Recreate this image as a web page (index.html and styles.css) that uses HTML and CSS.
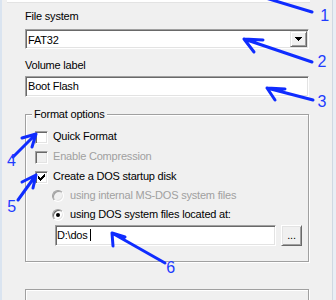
FILE: index.html
```html
<!DOCTYPE html>
<html lang="en">
  <head>
    <meta charset="UTF-8" />
    <meta name="viewport" content="width=device-width, initial-scale=1.0" />
    <title>Format Removable Disk</title>
    <link rel="stylesheet" href="styles.css">
  </head>
  <body>
    <div class="window">
      <div class="top-strip"></div>
      <div class="content">
        <label class="field-label">File system</label>
        <div class="combo">
          <span class="combo-value">FAT32</span>
          <span class="combo-btn">
            <svg width="7" height="4" viewBox="0 0 7 4"><path d="M0 0h7v1h-1v1h-1v1h-1v1h-1v-1h-1v-1h-1v-1h-1z" /></svg>
          </span>
        </div>

        <label class="field-label">Volume label</label>
        <div class="textbox">Boot Flash</div>

        <div class="group">
          <div class="group-title">Format options</div>
          <div class="check-row"><span class="check"></span>Quick Format</div>
          <div class="check-row disabled"><span class="check"></span>Enable Compression</div>
          <div class="check-row">
            <span class="check">
              <svg width="9" height="9" viewBox="0 0 9 9" shape-rendering="crispEdges"><path d="M7 1h1v1h-1z M6 2h2v1h-2z M1 3h1v1h-1z M5 3h3v1h-3z M1 4h2v1h-2z M4 4h3v1h-3z M1 5h5v1h-5z M2 6h3v1h-3z M3 7h1v1h-1z" /></svg>
            </span>Create a DOS startup disk
          </div>
          <div class="radio-row disabled"><span class="radio"></span>using internal MS-DOS system files</div>
          <div class="radio-row"><span class="radio selected"></span>using DOS system files located at:</div>
          <div class="path-row">
            <div class="textbox path">D:\dos<span class="caret"></span></div>
            <span class="button">...</span>
          </div>
        </div>

        <div class="group group-next"></div>
      </div>

      <!-- blue annotation arrows drawn over the dialog -->
      <svg class="notes" width="336" height="300" viewBox="0 0 336 300">
        <g class="arrows">
          <path d="M312 12 L259 -4" />
          <path d="M312 62 L244 39 M254 52 L244 39 L263 40" />
          <path d="M313 100 L267 88 M285 89 L267 88 L275 100" />
          <path d="M13 157 L36 134 M22 138 L36 134 L32 147" />
          <path d="M18 200 L36 175 M22 182 L36 175 L33 188" />
          <path d="M165 263 L112 233 M125 237 L112 233 L113 246" />
        </g>
        <text x="320.3" y="21">1</text>
        <text x="317.5" y="67">2</text>
        <text x="317.5" y="107">3</text>
        <text x="7" y="165.5">4</text>
        <text x="7.3" y="212">5</text>
        <text x="166.3" y="273">6</text>
      </svg>
    </div>
  </body>
</html>
```

FILE: styles.css
```css
body {
  margin: 0;
  background: #e9eef5;
  font-family: "Liberation Sans", Arial, sans-serif;
  font-size: 11px;
  line-height: 13px;
  letter-spacing: -0.2px;
  color: #000;
}
.window {
  position: relative;
  width: 330px;
  height: 300px;
  overflow: hidden;
  background: #f0f0f0;
  border-left: 2px solid #dae4f0;
  border-right: 1px solid #d0d8e2;
}
.top-strip {
  margin-left: 5px;
  width: 303px;
  height: 2px;
  background: #fff;
  border-bottom: 1px solid #e3e3e3;
}
.content {
  padding-left: 23px;
}
.field-label {
  display: block;
  margin-top: 7px;
}
.field-label + .textbox {
  margin-top: 4px;
}
.combo + .field-label {
  margin-top: 10px;
}

/* sunken 3d fields */
.combo,
.textbox {
  box-sizing: border-box;
  width: 284px;
  background: #fff;
  border: 1px solid;
  border-color: #a0a0a0 #fff #fff #a0a0a0;
  box-shadow: inset 1px 1px #696969, inset -1px -1px #e3e3e3;
}
.combo {
  display: flex;
  height: 20px;
  margin-top: 6px;
  padding: 1px;
}
.combo-value {
  flex: 1;
  padding: 3px 0 0 1px;
}
.combo-btn {
  box-sizing: border-box;
  display: flex;
  align-items: center;
  justify-content: center;
  width: 17px;
  height: 16px;
  background: #f0f0f0;
  border: 1px solid;
  border-color: #e3e3e3 #696969 #696969 #e3e3e3;
  box-shadow: inset 1px 1px #fff, inset -1px -1px #a0a0a0;
}
.textbox {
  height: 21px;
  padding: 3px 0 0 2px;
}

/* etched group box */
.group {
  box-sizing: border-box;
  width: 284px;
  margin-top: 17px;
  padding: 0 0 15px 9px;
  border: 1px solid #a0a0a0;
  box-shadow: inset 1px 1px #fff, 1px 1px #fff;
}
.group-title {
  display: table;
  margin: -7px 0 0 -3px;
  padding: 0 2px;
  background: #f0f0f0;
}
.group-next {
  height: 40px;
  margin-top: 27px;
  padding: 0;
}

.check-row,
.radio-row {
  display: flex;
  align-items: flex-start;
  height: 13px;
  margin-top: 7px;
}
.group-title + .check-row {
  margin-top: 9px;
}
.radio-row {
  margin-top: 6px;
  padding-left: 17px;
}
.disabled {
  color: #a0a0a0;
}
.check {
  box-sizing: border-box;
  display: flex;
  align-items: center;
  justify-content: center;
  width: 13px;
  height: 13px;
  margin: 1px 5px 0 0;
  background: #fff;
  border: 1px solid;
  border-color: #a0a0a0 #fff #fff #a0a0a0;
  box-shadow: inset 1px 1px #696969, inset -1px -1px #e3e3e3;
}
.disabled .check {
  background: #f0f0f0;
}
.radio {
  box-sizing: border-box;
  position: relative;
  width: 12px;
  height: 12px;
  margin: 1px 6px 0 0;
  border-radius: 50%;
  background: #fff;
  border: 1px solid;
  border-color: #a0a0a0 #fff #fff #a0a0a0;
  box-shadow: inset 1px 1px #696969, inset -1px -1px #e3e3e3;
}
.disabled .radio {
  background: #f0f0f0;
  box-shadow: inset 1px 1px #a0a0a0, inset -1px -1px #e3e3e3;
}
.radio.selected::after {
  content: "";
  position: absolute;
  left: 3px;
  top: 3px;
  width: 4px;
  height: 4px;
  border-radius: 50%;
  background: #000;
}

.path-row {
  display: flex;
  margin-top: 4px;
  padding-left: 20px;
}
.textbox.path {
  width: 221px;
  margin-right: 5px;
  padding-left: 1px;
}
.caret {
  display: inline-block;
  width: 1px;
  height: 12px;
  margin-left: 2px;
  vertical-align: -2px;
  background: #000;
}
.button {
  box-sizing: border-box;
  display: flex;
  align-items: center;
  justify-content: center;
  width: 21px;
  height: 21px;
  padding-bottom: 1px;
  background: #f0f0f0;
  border: 1px solid;
  border-color: #fff #696969 #696969 #fff;
  box-shadow: inset 1px 1px #e3e3e3, inset -1px -1px #a0a0a0;
}

.notes {
  position: absolute;
  left: -2px;
  top: 0;
  pointer-events: none;
}
.arrows {
  fill: none;
  stroke: #0f2cff;
  stroke-width: 3;
  stroke-linecap: round;
  stroke-linejoin: round;
}
.notes text {
  font-family: "Liberation Sans", Arial, sans-serif;
  font-size: 16px;
  letter-spacing: 0;
  fill: #1f3cff;
}
```
